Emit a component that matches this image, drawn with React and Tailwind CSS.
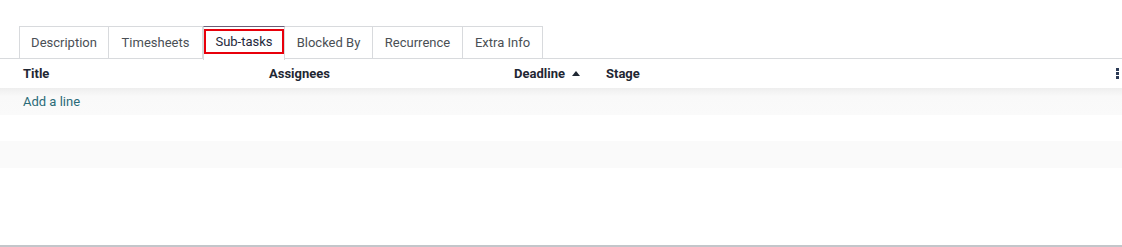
import React from 'react';

const tabs = [
  { label: 'Description', w: 'w-[90px]' },
  { label: 'Timesheets', w: 'w-[94px]' },
  { label: 'Sub-tasks', w: 'w-[82px]', active: true },
  { label: 'Blocked By', w: 'w-[88px]' },
  { label: 'Recurrence', w: 'w-[90px]' },
  { label: 'Extra Info', w: 'w-[80px]' },
];

const App = () => {
  return (
    <div
      className="w-[1122px] h-[247px] bg-white text-[13px] flex flex-col"
      style={{ fontFamily: 'Roboto, "Liberation Sans", sans-serif' }}
    >
      {/* Onglets */}
      <div className="mt-[26px] flex border-b border-[#d8dadd] pl-[19px] h-[33px]">
        {tabs.map((t, i) =>
          t.active ? (
            <div
              key={t.label}
              className={`${t.w} -mb-px h-[34px] bg-white border-x border-t border-[#d8dadd] border-t-[#6b5e78] flex items-start pt-px`}
            >
              <div className="w-full h-[25px] mt-px border-2 border-[#e8000b] flex items-center justify-center text-[#24283b]">
                {t.label}
              </div>
            </div>
          ) : (
            <div
              key={t.label}
              className={`${t.w} h-full border-t border-r border-[#d8dadd] ${i === 0 ? 'border-l' : ''} ${tabs[i - 1]?.active ? 'border-l-0' : ''} flex items-center justify-center text-[#4a4f55]`}
            >
              {t.label}
            </div>
          )
        )}
        <div className="flex-1" />
      </div>

      {/* En-tête du tableau */}
      <div className="h-[29px] flex items-center font-bold text-[#1f2733]">
        <div className="w-[269px] pl-[23px]">Title</div>
        <div className="w-[245px]">Assignees</div>
        <div className="w-[92px] flex items-center gap-[7px]">
          Deadline
          <svg width="8" height="5" viewBox="0 0 8 5">
            <path d="M0 5 L4 0 L8 5 Z" fill="#1f2733" />
          </svg>
        </div>
        <div className="flex-1">Stage</div>
        <div className="pr-[3px] flex flex-col gap-[1px] items-start">
          <span className="w-[3px] h-[3px] bg-[#2b3a55]" />
          <span className="w-[3px] h-[3px] bg-[#2b3a55]" />
          <span className="w-[3px] h-[3px] bg-[#2b3a55]" />
        </div>
      </div>

      {/* Lignes */}
      <div className="h-[27px] flex items-center pl-[23px] bg-gradient-to-b from-[#eeeeee] via-[#f9f9f9] via-30% to-[#fafafa] text-[#2a6b78]">
        Add a line
      </div>
      <div className="h-[26px] bg-white" />
      <div className="h-[27px] bg-[#fafafa]" />
      <div className="flex-1 bg-white border-b-2 border-[#c3c6ca]" />
    </div>
  );
};

export default App;
